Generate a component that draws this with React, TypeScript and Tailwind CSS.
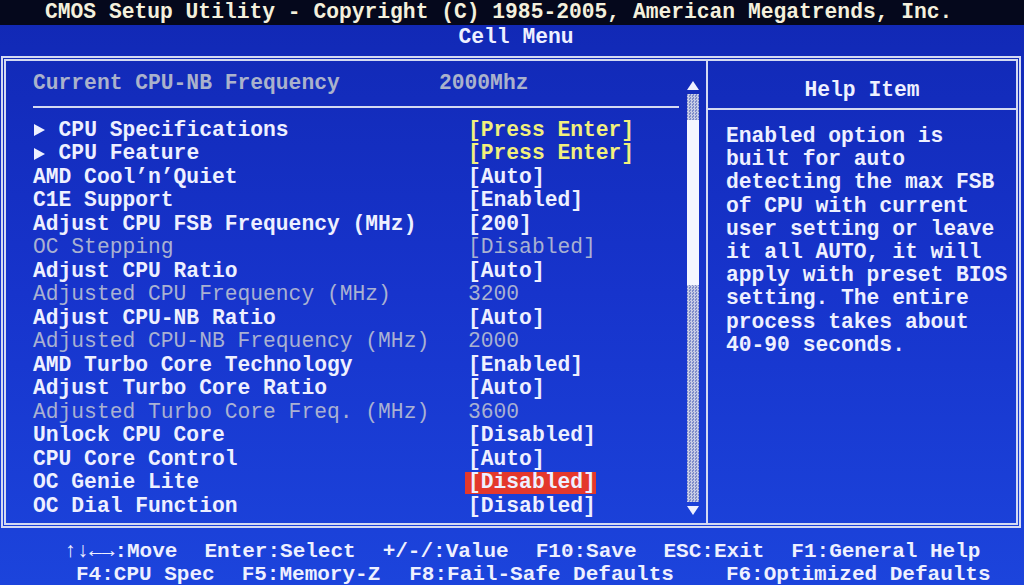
import React from "react";

const FONT = { fontFamily: "'Liberation Mono', 'DejaVu Sans Mono', monospace" };

type Row = { label: string; value: string; kind?: "sub" | "gray" | "sel" };

const rows: Row[] = [
  { label: "CPU Specifications", value: "[Press Enter]", kind: "sub" },
  { label: "CPU Feature", value: "[Press Enter]", kind: "sub" },
  { label: "AMD Cool\u2019n\u2019Quiet", value: "[Auto]" },
  { label: "C1E Support", value: "[Enabled]" },
  { label: "Adjust CPU FSB Frequency (MHz)", value: "[200]" },
  { label: "OC Stepping", value: "[Disabled]", kind: "gray" },
  { label: "Adjust CPU Ratio", value: "[Auto]" },
  { label: "Adjusted CPU Frequency (MHz)", value: "3200", kind: "gray" },
  { label: "Adjust CPU-NB Ratio", value: "[Auto]" },
  { label: "Adjusted CPU-NB Frequency (MHz)", value: "2000", kind: "gray" },
  { label: "AMD Turbo Core Technology", value: "[Enabled]" },
  { label: "Adjust Turbo Core Ratio", value: "[Auto]" },
  { label: "Adjusted Turbo Core Freq. (MHz)", value: "3600", kind: "gray" },
  { label: "Unlock CPU Core", value: "[Disabled]" },
  { label: "CPU Core Control", value: "[Auto]" },
  { label: "OC Genie Lite", value: "[Disabled]", kind: "sel" },
  { label: "OC Dial Function", value: "[Disabled]" },
];

const help = [
  "Enabled option is",
  "built for auto",
  "detecting the max FSB",
  "of CPU with current",
  "user setting or leave",
  "it all AUTO, it will",
  "apply with preset BIOS",
  "setting. The entire",
  "process takes about",
  "40-90 seconds.",
];

function Arrow() {
  return (
    <span className="inline-flex w-[25.6px] items-center">
      <svg width="11" height="12" viewBox="0 0 11 12" className="ml-[1px]">
        <path d="M0 0 L11 6 L0 12 Z" fill="#eef0ff" />
      </svg>
    </span>
  );
}

export default function App() {
  return (
    <div
      className="w-[1024px] h-[585px] overflow-hidden flex flex-col bg-linear-to-b from-[#1128b4] via-[#1734cc] to-[#1c44dc] text-[#eef0ff] font-bold text-[21.3px] leading-[23.5px] whitespace-pre"
      style={FONT}
    >
      {/* Title band */}
      <div className="h-[25px] shrink-0 bg-[#05081c] flex items-center pl-[45px] pt-[1px] text-[#f4f0dc]">
        CMOS Setup Utility - Copyright (C) 1985-2005, American Megatrends, Inc.
      </div>
      <div className="h-[24px] shrink-0 flex items-center justify-center pl-[8px] pt-[2px]">Cell Menu</div>
      <div className="h-[7px] shrink-0" />

      {/* Main box */}
      <div className="h-[472px] shrink-0 ml-[1px] mr-[3px] border-[5px] border-double border-[#d4daf2] flex">
        {/* Left panel */}
        <div className="w-[700px] shrink-0 flex">
          <div className="flex-1 pl-[27px] pt-[11px]">
            <div className="flex text-[#aab2cc]">
              <span className="w-[406px]">Current CPU-NB Frequency</span>
              <span>2000Mhz</span>
            </div>
            <div className="mt-[10px] h-[2px] w-[646px] bg-[#d4daf2]" />
            <div className="mt-[11px] flex flex-col">
              {rows.map((r, i) => {
                const gray = r.kind === "gray";
                return (
                  <div key={i} className="flex h-[23.5px] items-center">
                    <span
                      className={
                        "w-[435px] flex items-center " +
                        (gray ? "text-[#a9b1d2] font-normal" : "")
                      }
                    >
                      {r.kind === "sub" && <Arrow />}
                      {r.label}
                    </span>
                    {r.kind === "sel" ? (
                      <span className="-ml-[3px] pl-[3px] bg-[#e4382c] h-[22px] flex items-center w-[131px]">
                        {r.value}
                      </span>
                    ) : (
                      <span
                        className={
                          r.kind === "sub"
                            ? "text-[#f2f07c]"
                            : gray
                            ? "text-[#a9b1d2] font-normal"
                            : ""
                        }
                      >
                        {r.value}
                      </span>
                    )}
                  </div>
                );
              })}
            </div>
          </div>
          {/* Scrollbar */}
          <div className="w-[12px] mr-[7px] mt-[20px] mb-[8px] flex flex-col items-center">
            <svg width="12" height="9" viewBox="0 0 12 9">
              <path d="M6 0 L12 9 L0 9 Z" fill="#eef0ff" />
            </svg>
            <div className="mt-[4px] w-[12px] flex-1 flex flex-col bg-[repeating-conic-gradient(#c8cde6_0%_25%,#7f8cc8_0%_50%)] bg-size-[3px_3px]">
              <div className="h-[26px]" />
              <div className="h-[165px] bg-[#f4f6ff]" />
            </div>
            <svg width="12" height="9" viewBox="0 0 12 9" className="mt-[4px]">
              <path d="M0 0 L12 0 L6 9 Z" fill="#eef0ff" />
            </svg>
          </div>
        </div>
        {/* Divider */}
        <div className="w-[2px] shrink-0 bg-[#d4daf2]" />
        {/* Right panel */}
        <div className="flex-1 flex flex-col">
          <div className="h-[47px] flex items-center justify-center pt-[13px]">Help Item</div>
          <div className="h-[2px] bg-[#d4daf2]" />
          <div className="pl-[18px] pt-[15px] leading-[23.2px]">
            {help.map((l, i) => (
              <div key={i}>{l}</div>
            ))}
          </div>
        </div>
      </div>

      {/* Footer */}
      <div className="flex flex-col pt-[12px] text-[21px] leading-[23px]">
        <div className="flex pl-[64px] gap-[27px]">
          <span>{"\u2191\u2193\u2190\u2192:Move"}</span>
          <span>Enter:Select</span>
          <span>+/-/:Value</span>
          <span>F10:Save</span>
          <span>ESC:Exit</span>
          <span>F1:General Help</span>
        </div>
        <div className="flex pl-[76px]">
          <span>F4:CPU Spec</span>
          <span className="ml-[27px]">F5:Memory-Z</span>
          <span className="ml-[29px]">F8:Fail-Safe Defaults</span>
          <span className="ml-[52px]">F6:Optimized Defaults</span>
        </div>
      </div>
    </div>
  );
}
